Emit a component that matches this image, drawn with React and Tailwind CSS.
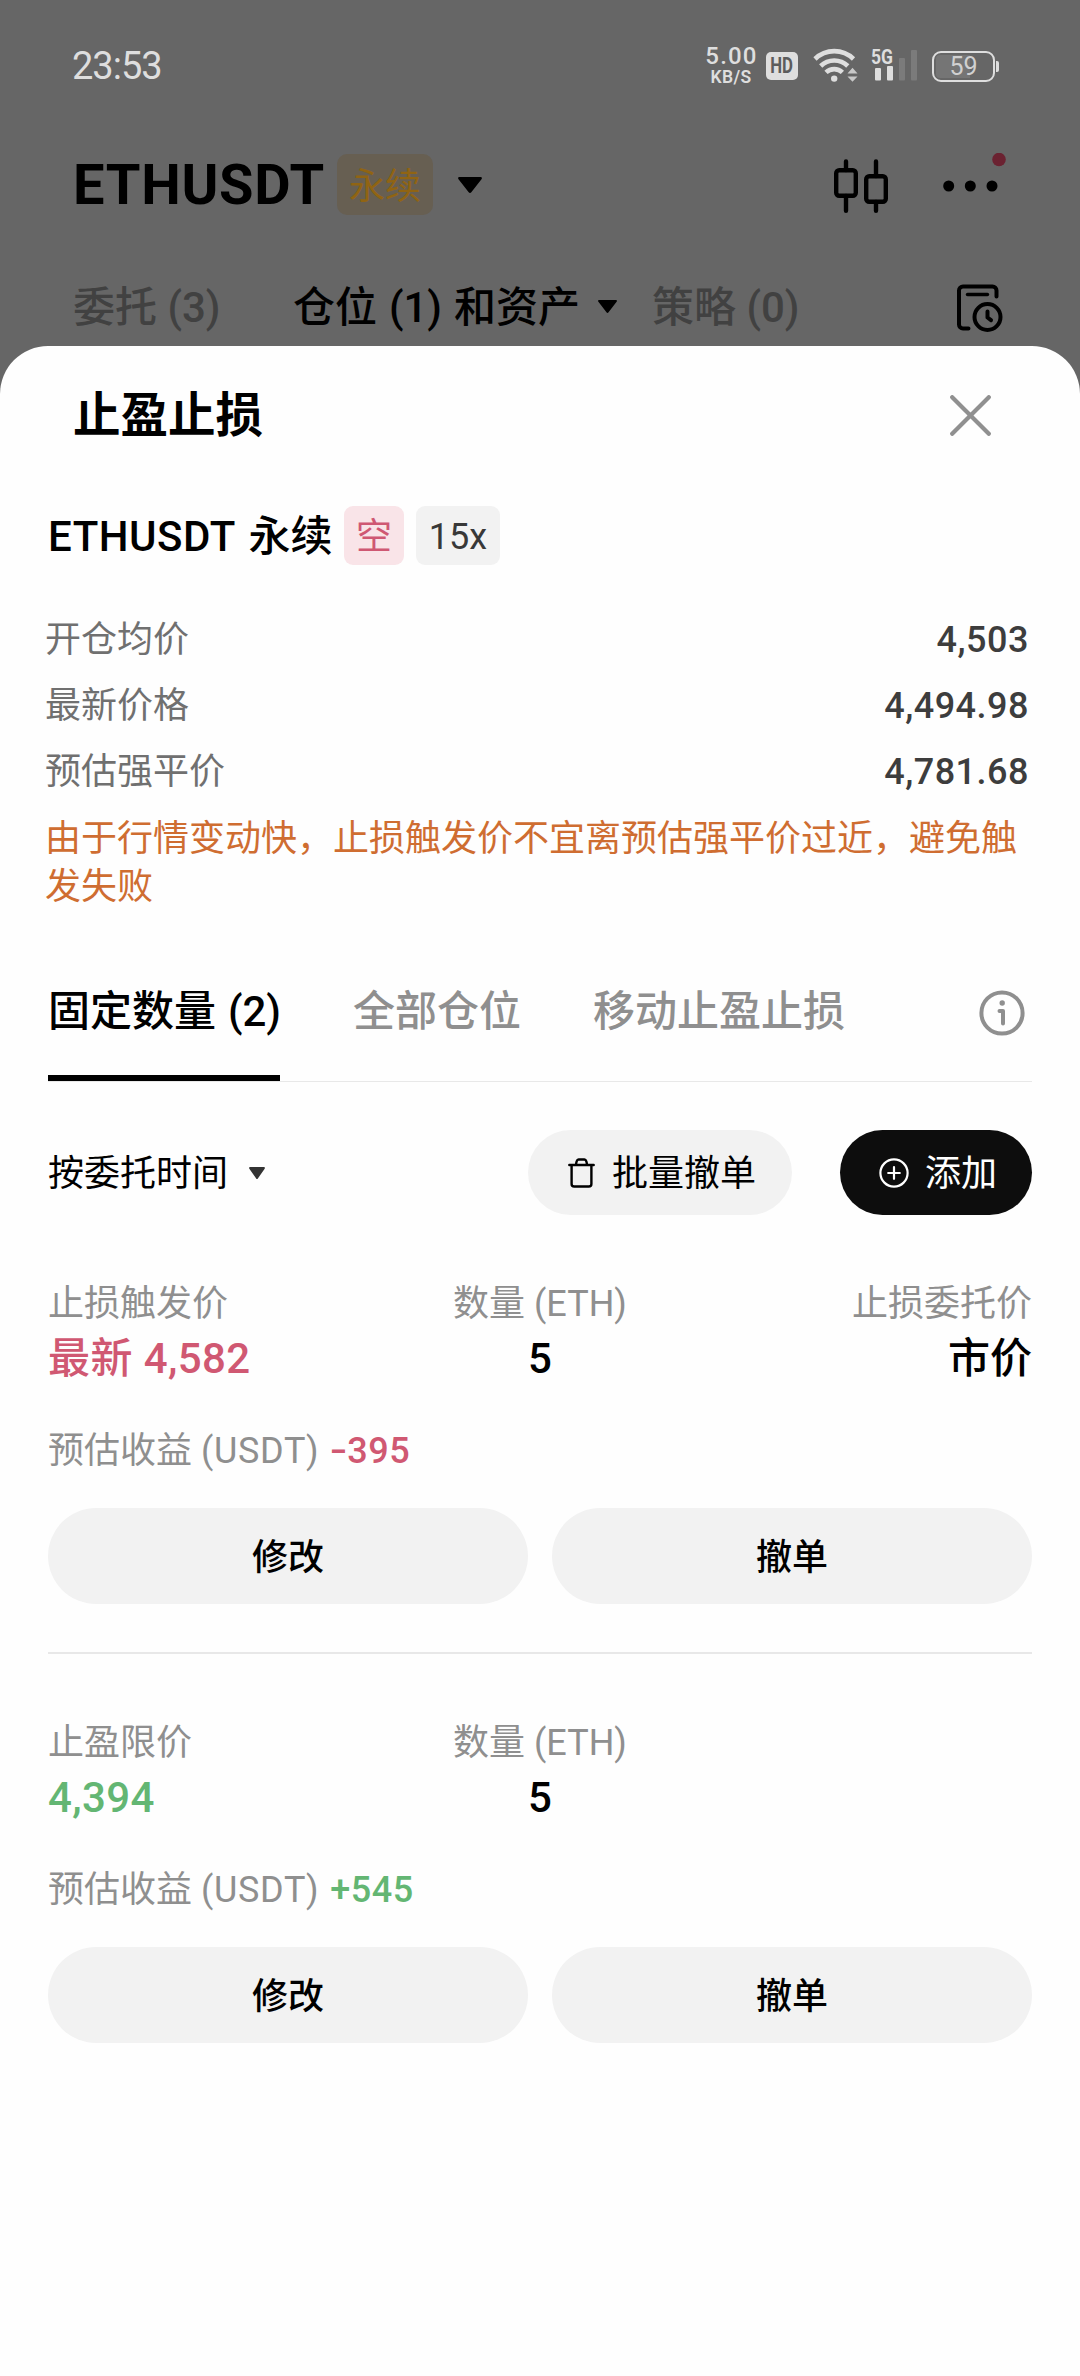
import React from "react";

function Caret({ className }) {
  return (
    <svg className={className} viewBox="0 0 24 16" preserveAspectRatio="none" fill="currentColor">
      <path d="M1.5 0h21c1.3 0 1.8 1.2 1 2.2L13.3 15.2c-.7.9-1.9.9-2.6 0L.5 2.2C-.3 1.2.2 0 1.5 0z" />
    </svg>
  );
}

function WifiIcon() {
  return (
    <svg className="h-[36px] w-[46px]" viewBox="0 0 46 36" fill="none" stroke="#dedede">
      <path d="M2 12a27.5 27.5 0 0 1 38.5 0" strokeWidth="4.6" />
      <path d="M7.7 19a19.3 19.3 0 0 1 27.1 0" strokeWidth="4.6" />
      <path d="M13 25.4a11.8 11.8 0 0 1 16.4 0" strokeWidth="4.6" />
      <circle cx="21.2" cy="31.6" r="3.2" fill="#dedede" stroke="none" />
      <path d="M34.5 26.4l5-5.6 5 5.6zM34.5 29.4l5 5.4 5-5.4z" fill="#c8c8c8" stroke="none" />
    </svg>
  );
}

function StatusBar() {
  return (
    <div className="flex h-[132px] items-center pl-[72px] pr-[81px] text-[#dedede]">
      <span className="text-[38px] leading-none tracking-[-1px]">23:53</span>
      <div className="ml-auto flex items-center">
        <div className="flex w-[54px] flex-col items-center whitespace-nowrap">
          <span className="pl-[1px] text-[24px] leading-[21px] font-medium tracking-[1.2px]">5.00</span>
          <span className="text-[17.5px] leading-[20px] font-semibold tracking-[0.4px]">KB/S</span>
        </div>
        <div className="ml-[8px] flex h-[28px] w-[32px] items-center justify-center rounded-[5px] bg-[#dedede] text-[21.5px] leading-none font-bold text-[#5c5c5c]">
          <span className="scale-x-[0.78]">HD</span>
        </div>
        <div className="-mt-[3px] ml-[15px]">
          <WifiIcon />
        </div>
        <svg className="-mt-[7px] ml-[12px] h-[39px] w-[48px]" viewBox="0 -6 48 39" fill="#dedede">
          <text x="0" y="15" fontFamily="Roboto" fontSize="21" fontWeight="700" textLength="22" lengthAdjust="spacingAndGlyphs">
            5G
          </text>
          <rect x="4" y="19" width="6" height="12.5" rx="1" />
          <rect x="16" y="17" width="6" height="14.5" rx="1" />
          <rect x="28" y="9" width="6" height="22.5" rx="1" fill="#7b7b7b" />
          <rect x="40" y="1" width="6" height="30.5" rx="1" fill="#7b7b7b" />
        </svg>
        <div className="relative ml-[13px] h-[31px] w-[63px] rounded-[9px] border-[2.5px] border-[#dedede] p-[2px]">
          <div className="h-full w-[34px] rounded-l-[4px] bg-[#757575]" />
          <span className="absolute inset-0 flex items-center justify-center text-[25px] leading-none text-[#d0d0d0]">59</span>
        </div>
        <div className="ml-[1px] h-[11px] w-[3px] rounded-r-[2px] bg-[#dedede]" />
      </div>
    </div>
  );
}

function Header() {
  return (
    <header className="h-[376px] bg-[#666]">
      <StatusBar />
      <div className="flex h-[104px] items-center pl-[73px] pr-[81px]">
        <h1 className="w-[264px] pt-[2px] text-[56px] leading-none font-bold tracking-[0.7px] text-black">ETHUSDT</h1>
        <span className="flex h-[61px] w-[96px] items-center justify-center rounded-[10px] bg-[#675f52] pt-[5px] text-[36px] leading-none text-[#906413]">
          永续
        </span>
        <Caret className="mt-[2px] ml-[25px] h-[16px] w-[24px] text-black" />
        <svg className="mt-[4px] ml-auto h-[54px] w-[54px]" viewBox="0 0 54 54" fill="none" stroke="#000" strokeWidth="4.4" strokeLinecap="round">
          <rect x="2.2" y="11.2" width="19.6" height="25.6" rx="3" />
          <path d="M12 2.4V11M12 37v14.8" />
          <rect x="32.2" y="17.2" width="19.6" height="25.6" rx="3" />
          <path d="M42 2.4V17M42 43v8.8" />
        </svg>
        <svg className="-mr-[7px] ml-[54px] h-[62px] w-[64px]" viewBox="0 0 64 62">
          <circle cx="6.7" cy="33" r="5.5" />
          <circle cx="28.3" cy="33" r="5.5" />
          <circle cx="50" cy="33" r="5.5" />
          <circle cx="57" cy="6.5" r="6.8" fill="#6b2231" />
        </svg>
      </div>
      <div className="flex h-[140px] items-center pr-[77px] pl-[73px] text-[42px] leading-none font-medium whitespace-nowrap text-[#414141]">
        <span className="w-[220px] pt-[3px]">委托 (3)</span>
        <span className="w-[305px] pt-[3px] [word-spacing:1.5px] text-black">仓位 (1) 和资产</span>
        <Caret className="h-[13px] w-[19px] text-black" />
        <span className="ml-[35px] pt-[3px]">策略 (0)</span>
        <svg className="mt-[4px] ml-auto h-[48px] w-[46px]" viewBox="0 0 46 48" fill="none" stroke="#000" strokeWidth="4" strokeLinecap="round" strokeLinejoin="round">
          <path d="M39.5 12.5V6.5a4 4 0 0 0-4-4H6a4 4 0 0 0-4 4v34a4 4 0 0 0 4 4h5.5" />
          <path d="M10.5 10.5h20" strokeWidth="3.4" />
          <circle cx="30.5" cy="33" r="13" />
          <path d="M30.5 27.5v6l3.5 2.7" />
        </svg>
      </div>
    </header>
  );
}

function InfoRow({ label, value }) {
  return (
    <div className="flex h-[66px] items-center justify-between text-[36px] leading-none">
      <span className="text-[#707070]">{label}</span>
      <span className="font-medium tracking-[0.5px] text-[#3d3d3d]">{value}</span>
    </div>
  );
}

function Tabs() {
  return (
    <div className="mx-[48px] mt-[29px] flex h-[142px] border-b border-[#e8e8e8] text-[42px] leading-none font-medium whitespace-nowrap text-[#8f8f8f]">
      <div className="relative flex h-[140px] w-[232px] items-center pt-[3px] [word-spacing:1.5px] text-black">
        固定数量 (2)
        <span className="absolute -bottom-px left-0 h-[6px] w-full bg-black" />
      </div>
      <div className="ml-[73px] flex h-[140px] items-center pt-[3px]">全部仓位</div>
      <div className="ml-[72px] flex h-[140px] items-center pt-[3px]">移动止盈止损</div>
      <div className="mr-[7px] ml-auto flex h-[146px] items-center">
        <svg className="h-[46px] w-[46px]" viewBox="0 0 46 46" fill="none" stroke="#8f8f8f" strokeWidth="4" strokeLinecap="round" strokeLinejoin="round">
          <circle cx="23" cy="23" r="20.6" />
          <path d="M20.5 21H24v12.5" />
          <circle cx="23.2" cy="13" r="2.7" fill="#8f8f8f" stroke="none" />
        </svg>
      </div>
    </div>
  );
}

function Toolbar() {
  return (
    <div className="mx-[48px] mt-[48px] flex h-[85px] items-center text-[36px] leading-none">
      <span className="pt-[3px] text-black">按委托时间</span>
      <Caret className="ml-[21px] h-[12px] w-[16px] text-[#333]" />
      <button className="ml-auto flex h-full w-[264px] items-center rounded-full bg-[#f2f2f2] pl-[40px] text-black">
        <svg className="h-[30px] w-[27px]" viewBox="0 0 27 30" fill="none" stroke="#000" strokeWidth="2.4" strokeLinecap="round" strokeLinejoin="round">
          <path d="M1.3 7h24.4M8 6.5q.6-5 2.6-5h5.8q2 0 2.6 5" />
          <path d="M3.6 7.5v18.4a2.6 2.6 0 0 0 2.6 2.6h14.6a2.6 2.6 0 0 0 2.6-2.6V7.5" />
        </svg>
        <span className="ml-[17px] pt-[3px]">批量撤单</span>
      </button>
      <button className="ml-[48px] flex h-full w-[192px] items-center rounded-full bg-[#0d0d0d] pl-[39px] text-white">
        <svg className="h-[30px] w-[30px]" viewBox="0 0 30 30" fill="none" stroke="#fff" strokeWidth="2.2" strokeLinecap="round">
          <circle cx="15" cy="15" r="13.6" />
          <path d="M15 9.2v11.6M9.2 15h11.6" />
        </svg>
        <span className="ml-[16px] pt-[3px]">添加</span>
      </button>
    </div>
  );
}

function Pnl({ value, color }) {
  return (
    <span className={`ml-[2px] font-medium tracking-[0.5px] ${color}`}>
      {value[0] === "-" ? <span className="mr-[2px] inline-block w-[15px] origin-left scale-x-[1.4]">-</span> : value[0]}
      {value.slice(1)}
    </span>
  );
}

function Order({ label, value, color, right, pnl }) {
  return (
    <section className="px-[48px] pt-[62px]">
      <div className="grid grid-cols-[405px_174px_1fr] whitespace-nowrap">
        <div>
          <div className="text-[36px] leading-[54px] text-[#8f8f8f]">{label}</div>
          <div className={`text-[42px] leading-[56px] font-medium tracking-[0.4px] ${color}`}>{value}</div>
        </div>
        <div className="text-center">
          <div className="text-[36px] leading-[54px] text-[#8f8f8f]">数量 (ETH)</div>
          <div className="text-[42px] leading-[56px] font-medium text-black">5</div>
        </div>
        {right && (
          <div className="text-right">
            <div className="text-[36px] leading-[54px] text-[#8f8f8f]">{right[0]}</div>
            <div className="text-[42px] leading-[56px] font-medium text-black">{right[1]}</div>
          </div>
        )}
      </div>
      <div className="mt-[39px] text-[36px] leading-[50px] text-[#8f8f8f]">
        预估收益 <span className="tracking-[0.7px]">(USDT)</span> <Pnl value={pnl} color={color} />
      </div>
      <div className="mt-[32px] grid grid-cols-2 gap-[24px] text-[36px] leading-none font-medium text-black">
        <button className="h-[96px] rounded-full bg-[#f2f2f2] pt-[3px]">修改</button>
        <button className="h-[96px] rounded-full bg-[#f2f2f2] pt-[3px]">撤单</button>
      </div>
    </section>
  );
}

export default function App() {
  return (
    <div className="h-[2376px] w-[1080px] overflow-hidden bg-[#666] font-[Roboto,'Noto_Sans_CJK_SC',sans-serif]" lang="zh-CN">
      <Header />
      <main className="relative -mt-[30px] h-[2030px] rounded-t-[48px] bg-[#fefefe]">
        <div className="flex h-[138px] items-center justify-between pr-[89px] pl-[73px]">
          <h2 className="pt-[3px] text-[47.5px] leading-none font-bold text-black">止盈止损</h2>
          <svg className="h-[41px] w-[41px]" viewBox="0 0 41 41" stroke="#909090" strokeWidth="4.2" strokeLinecap="round">
            <path d="M2.2 2.2l36.6 36.6M38.8 2.2L2.2 38.8" />
          </svg>
        </div>
        <div className="flex h-[102px] items-center pl-[48px] leading-none">
          <span className="w-[296px] pt-[3px] text-[42px] font-medium whitespace-nowrap text-black">
            <span className="tracking-[0.5px]">ETHUSDT</span> <span className="ml-[2px]">永续</span>
          </span>
          <span className="flex h-[59px] w-[60px] items-center justify-center rounded-[9px] bg-[#f9e4e8] pt-[4px] text-[36px] text-[#cf5873]">空</span>
          <span className="ml-[12px] flex h-[59px] w-[84px] items-center justify-center rounded-[9px] bg-[#f2f2f2] pt-[3px] text-[36px] text-[#383838]">15x</span>
        </div>
        <div className="pt-[21px] pr-[51px] pl-[45px]">
          <InfoRow label="开仓均价" value="4,503" />
          <InfoRow label="最新价格" value="4,494.98" />
          <InfoRow label="预估强平价" value="4,781.68" />
          <p className="mt-[10px] text-[36px] leading-[48px] text-[#cf6d31]">由于行情变动快，止损触发价不宜离预估强平价过近，避免触发失败</p>
        </div>
        <Tabs />
        <Toolbar />
        <Order
          label="止损触发价"
          value="最新 4,582"
          color="text-[#d05872]"
          right={["止损委托价", "市价"]}
          pnl="-395"
        />
        <div className="mx-[48px] mt-[48px] h-[2px] bg-[#e8e8e8]" />
        <Order label="止盈限价" value="4,394" color="text-[#63b673]" pnl="+545" />
      </main>
    </div>
  );
}
